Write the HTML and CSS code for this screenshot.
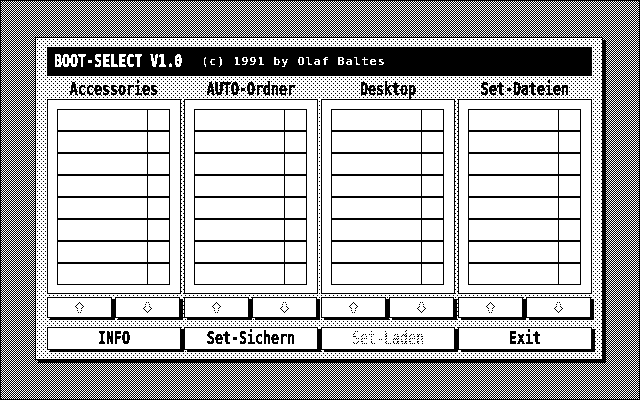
FILE: index.html
```html
<!DOCTYPE html>
<html lang="en">
<head>
<meta charset="UTF-8">
<title>BOOT-SELECT V1.0</title>
<link rel="stylesheet" href="styles.css">
</head>
<body>
    <!-- 1-bit look: cuts the text antialiasing off -->
    <svg class="defs" width="0" height="0">
        <defs>
            <filter id="mono" color-interpolation-filters="sRGB" x="0" y="0" width="100%" height="100%">
                <feComponentTransfer>
                    <feFuncA type="discrete" tableValues="0 1 1 1"></feFuncA>
                </feComponentTransfer>
            </filter>
            <symbol id="arrow-up" viewBox="0 0 9 11">
                <path d="M4 0h1v1h-1zM3 1h1v1h-1zM5 1h1v1h-1zM2 2h1v1h-1zM6 2h1v1h-1zM1 3h1v1h-1zM7 3h1v1h-1zM0 4h1v1h-1zM8 4h1v1h-1zM1 5h1v1h-1zM7 5h1v1h-1zM2 6h1v1h-1zM6 6h1v1h-1zM2 8h1v1h-1zM6 8h1v1h-1zM3 10h1v1h-1zM5 10h1v1h-1z"></path>
            </symbol>
            <symbol id="arrow-down" viewBox="0 0 9 11">
                <path d="M3 0h1v1h-1zM5 0h1v1h-1zM2 2h1v1h-1zM6 2h1v1h-1zM2 4h1v1h-1zM6 4h1v1h-1zM1 5h1v1h-1zM7 5h1v1h-1zM0 6h1v1h-1zM8 6h1v1h-1zM1 7h1v1h-1zM7 7h1v1h-1zM2 8h1v1h-1zM6 8h1v1h-1zM3 9h1v1h-1zM5 9h1v1h-1zM4 10h1v1h-1z"></path>
            </symbol>
        </defs>
    </svg>

    <div class="panel">
        <div class="title-bar">
            <span class="txt title">BOOT-SELECT V1.0</span>
            <span class="txt credit">(c) 1991 by Olaf Baltes</span>
        </div>

        <div class="grid labels">
            <span class="txt label">Accessories</span>
            <span class="txt label">AUTO-Ordner</span>
            <span class="txt label">Desktop</span>
            <span class="txt label">Set-Dateien</span>
        </div>

        <div class="grid boxes">
            <div class="box"><div class="list">
                <div class="row"></div><div class="row"></div><div class="row"></div><div class="row"></div>
                <div class="row"></div><div class="row"></div><div class="row"></div><div class="row"></div>
            </div></div>
            <div class="box"><div class="list">
                <div class="row"></div><div class="row"></div><div class="row"></div><div class="row"></div>
                <div class="row"></div><div class="row"></div><div class="row"></div><div class="row"></div>
            </div></div>
            <div class="box"><div class="list">
                <div class="row"></div><div class="row"></div><div class="row"></div><div class="row"></div>
                <div class="row"></div><div class="row"></div><div class="row"></div><div class="row"></div>
            </div></div>
            <div class="box"><div class="list">
                <div class="row"></div><div class="row"></div><div class="row"></div><div class="row"></div>
                <div class="row"></div><div class="row"></div><div class="row"></div><div class="row"></div>
            </div></div>
        </div>

        <div class="grid arrows">
            <div class="pair">
                <div class="btn small"><svg class="arrow"><use href="#arrow-up"></use></svg></div>
                <div class="btn small"><svg class="arrow"><use href="#arrow-down"></use></svg></div>
            </div>
            <div class="pair">
                <div class="btn small"><svg class="arrow"><use href="#arrow-up"></use></svg></div>
                <div class="btn small"><svg class="arrow"><use href="#arrow-down"></use></svg></div>
            </div>
            <div class="pair">
                <div class="btn small"><svg class="arrow"><use href="#arrow-up"></use></svg></div>
                <div class="btn small"><svg class="arrow"><use href="#arrow-down"></use></svg></div>
            </div>
            <div class="pair">
                <div class="btn small"><svg class="arrow"><use href="#arrow-up"></use></svg></div>
                <div class="btn small"><svg class="arrow"><use href="#arrow-down"></use></svg></div>
            </div>
        </div>

        <div class="grid actions">
            <div class="btn big"><span class="txt label">INFO</span></div>
            <div class="btn big"><span class="txt label">Set-Sichern</span></div>
            <div class="btn big"><span class="txt label off">Set-Laden</span></div>
            <div class="btn big"><span class="txt label">Exit</span></div>
        </div>
    </div>
</body>
</html>
```

FILE: styles.css
```css
/* Desktop with checker dither */
html, body {
    margin: 0;
    height: 100%;
}

body {
    box-sizing: border-box;
    width: 640px;
    height: 400px;
    padding: 36px 0 0 34px;
    overflow: hidden;
    border: 1px solid #000;
    background: conic-gradient(#000 25%, #fff 0 50%, #000 0 75%, #fff 0) 0 0 / 2px 2px;
    font-family: "DejaVu Sans Mono", monospace;
    font-weight: bold;
    color: #000;
}

.defs {
    display: block;
    height: 0;
}

/* Main dialog, sparse dot pattern */
.panel {
    box-sizing: border-box;
    width: 568px;
    height: 323px;
    padding: 9px 10px 9px 11px;
    border: 1px solid #000;
    box-shadow: 3px 3px 0 #000;
    background-color: #fff;
    background-image:
        conic-gradient(from 270deg at 1px 1px, #000 25%, transparent 0),
        conic-gradient(from 270deg at 1px 1px, #000 25%, transparent 0);
    background-size: 4px 4px;
    background-position: 1px 1px, 3px 3px;
}

.txt {
    display: inline-block;
    filter: url(#mono);
    white-space: nowrap;
}

/* Title bar */
.title-bar {
    display: flex;
    align-items: center;
    height: 29px;
    padding-left: 7px;
    background: #000;
    color: #fff;
}

.title {
    font-size: 13.33px;
    line-height: 16px;
    transform: scaleY(1.3);
}

.credit {
    margin-left: 19px;
    font-size: 11px;
    font-weight: normal;
    letter-spacing: 1.4px;
    transform: scaleY(0.9);
}

/* Four columns */
.grid {
    display: grid;
    grid-template-columns: repeat(4, 134px);
    column-gap: 3px;
}

.labels {
    box-sizing: border-box;
    height: 23px;
    padding-top: 5px;
    text-align: center;
    align-items: center;
}

.label {
    font-size: 13.33px;
    line-height: 16px;
    transform: scaleY(1.3);
}

.box {
    box-sizing: border-box;
    height: 195px;
    padding: 9px 10px 0 9px;
    border: 1px solid #000;
    background: #fff;
}

.row {
    box-sizing: border-box;
    height: 22px;
    border: 1px solid #000;
    background: linear-gradient(#000, #000) 89px 0 / 1px 100% no-repeat;
}

/* Buttons */
.btn {
    box-sizing: border-box;
    display: flex;
    align-items: center;
    justify-content: center;
    border: 1px solid #000;
    box-shadow: 3px 2px 0 #000;
    background: #fff;
}

.arrows {
    margin-top: 3px;
}

.pair {
    display: flex;
    gap: 3px;
    padding-right: 1px;
}

.small {
    width: 65px;
    height: 21px;
}

.arrow {
    width: 9px;
    height: 11px;
    shape-rendering: crispEdges;
}

.actions {
    margin-top: 9px;
}

.big {
    height: 23px;
}

/* Disabled label, dithered letters */
.off {
    font-weight: normal;
    color: transparent;
    background: conic-gradient(#000 25%, transparent 0 50%, #000 0 75%, transparent 0) 0 0 / 2px 2px;
    -webkit-background-clip: text;
    background-clip: text;
}
```
